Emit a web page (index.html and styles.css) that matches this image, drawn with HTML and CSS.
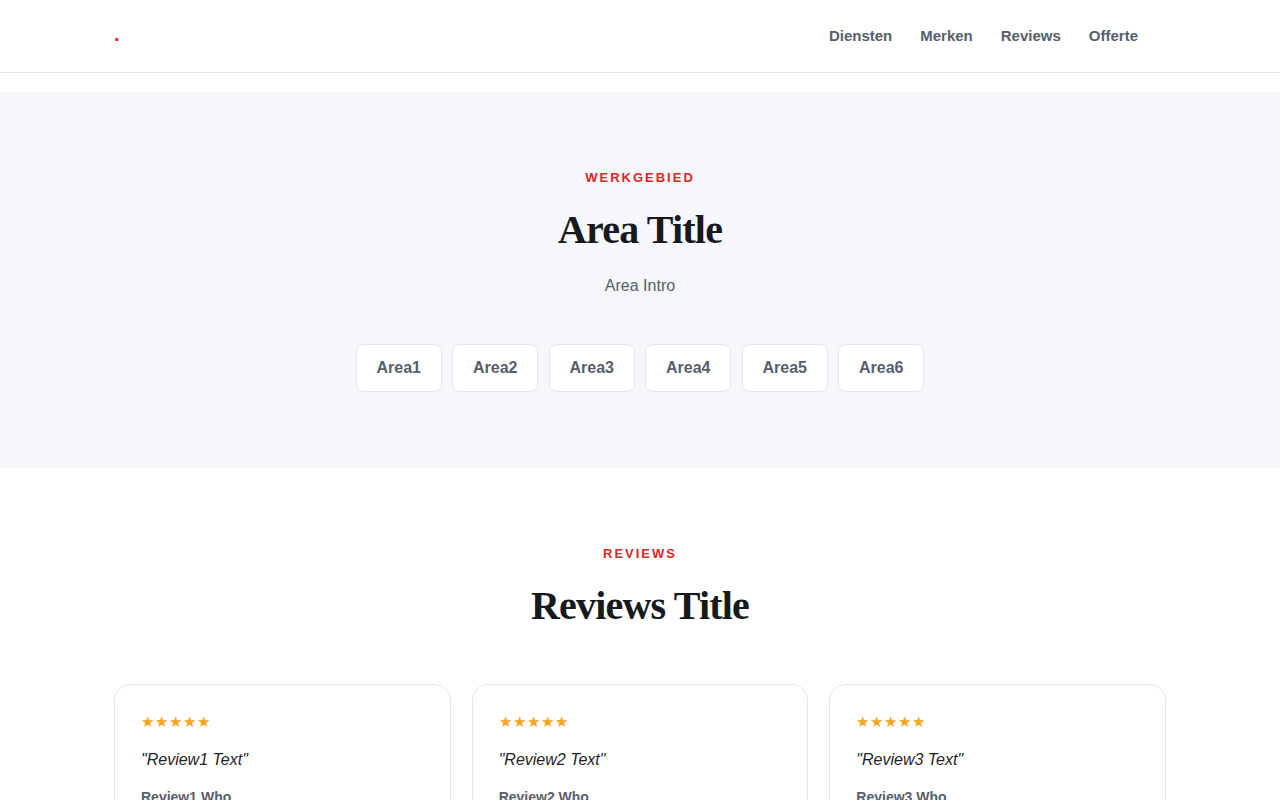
FILE: index.html
```html
<!DOCTYPE html>
<html lang="nl">
<head>
    <meta charset="UTF-8">
    <meta name="viewport" content="width=device-width, initial-scale=1.0">
    <title>Werkgebied &amp; Reviews</title>
    <link rel="stylesheet" href="styles.css">
</head>
<body>

    <header class="site-header">
        <div class="container header-inner">
            <a class="logo" href="#">.</a>
            <nav class="nav">
                <a href="#diensten">Diensten</a>
                <a href="#merken">Merken</a>
                <a href="#reviews">Reviews</a>
                <a href="#offerte">Offerte</a>
            </nav>
        </div>
    </header>

    <!-- werkgebied -->
    <section class="section section-gray" id="werkgebied">
        <div class="container center">
            <p class="eyebrow">Werkgebied</p>
            <h2 class="section-title">Area Title</h2>
            <p class="intro">Area Intro</p>
            <div class="areas">
                <span class="area">Area1</span>
                <span class="area">Area2</span>
                <span class="area">Area3</span>
                <span class="area">Area4</span>
                <span class="area">Area5</span>
                <span class="area">Area6</span>
            </div>
        </div>
    </section>

    <!-- reviews -->
    <section class="section" id="reviews">
        <div class="container center">
            <p class="eyebrow">Reviews</p>
            <h2 class="section-title">Reviews Title</h2>
        </div>
        <div class="container reviews">
            <div class="review">
                <div class="stars">★★★★★</div>
                <p class="review-text">"Review1 Text"</p>
                <p class="review-who">Review1 Who</p>
            </div>
            <div class="review">
                <div class="stars">★★★★★</div>
                <p class="review-text">"Review2 Text"</p>
                <p class="review-who">Review2 Who</p>
            </div>
            <div class="review">
                <div class="stars">★★★★★</div>
                <p class="review-text">"Review3 Text"</p>
                <p class="review-who">Review3 Who</p>
            </div>
        </div>
    </section>

</body>
</html>
```

FILE: styles.css
```css
* {
    box-sizing: border-box;
}

body {
    margin: 0;
    font-family: "Liberation Sans", Arial, sans-serif;
    color: #1f2328;
    background: #fff;
}

a {
    text-decoration: none;
}

.container {
    max-width: 1100px;
    margin: 0 auto;
    padding: 0 24px;
}

.center {
    text-align: center;
}

/* header */
.site-header {
    height: 73px;
    border-bottom: 1px solid #e5e7eb;
    background: #fff;
}

.header-inner {
    height: 72px;
    display: flex;
    align-items: center;
    justify-content: space-between;
}

.logo {
    color: #dc2626;
    font-weight: 700;
    font-size: 20px;
    line-height: 1;
    margin-top: -4px;
}

.nav {
    display: flex;
    gap: 28px;
    padding-right: 28px;
    margin-top: -2px;
}

.nav a {
    color: #56606c;
    font-weight: 700;
    font-size: 15px;
}

/* sections */
.section {
    padding: 78px 0 80px;
}

.section-gray {
    margin-top: 19px;
    background: #f6f7fa;
    padding: 78px 0 76px;
}

.eyebrow {
    margin: 0;
    color: #dc2626;
    font-size: 13px;
    font-weight: 700;
    letter-spacing: 2px;
    text-transform: uppercase;
}

.section-title {
    margin: 21px 0 0;
    font-family: "Liberation Serif", "Times New Roman", serif;
    font-size: 40px;
    font-weight: 700;
    letter-spacing: -0.8px;
    line-height: 1.2;
    color: #16191d;
}

.intro {
    margin: 23px 0 0;
    font-size: 16px;
    color: #56606c;
}

.areas {
    display: flex;
    justify-content: center;
    gap: 10.5px;
    margin-top: 49px;
}

.area {
    width: 86px;
    height: 48px;
    display: flex;
    align-items: center;
    justify-content: center;
    background: #fff;
    border: 1px solid #e5e7eb;
    border-radius: 8px;
    color: #56606c;
    font-weight: 700;
    font-size: 16px;
}

/* reviews */
.reviews {
    display: grid;
    grid-template-columns: repeat(3, 1fr);
    gap: 21px;
    margin-top: 54px;
}

.review {
    border: 1px solid #e5e7eb;
    border-radius: 16px;
    padding: 28px 26px;
    background: #fff;
}

.stars {
    color: #f5a524;
    font-size: 15px;
    letter-spacing: 1px;
}

.review-text {
    margin: 20px 0 0;
    font-style: italic;
    font-size: 16px;
    color: #1f2328;
}

.review-who {
    margin: 20px 0 0;
    font-size: 14px;
    font-weight: 700;
    color: #56606c;
}
```
